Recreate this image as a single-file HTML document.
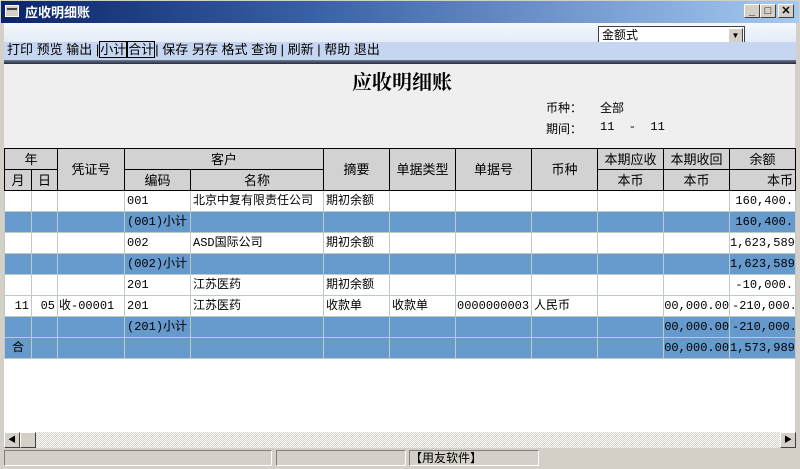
<!DOCTYPE html>
<html><head><meta charset="utf-8"><style>
*{margin:0;padding:0;box-sizing:border-box}
body{width:800px;height:469px;overflow:hidden;background:#d4d0c8;font-family:"Liberation Sans","Noto Sans CJK SC","WenQuanYi Zen Hei",sans-serif;font-size:12px;position:relative;color:#000}
.abs{position:absolute}
#title{left:0;top:0;width:800px;height:23px;background:linear-gradient(90deg,#0a246a 0%,#3a62a8 40%,#a6caf0 100%);color:#fff;font-weight:bold;font-size:13px;line-height:23px;padding-left:24px;border:1px solid #d4d0c8;border-bottom:none}
.wb{top:4px;width:16px;height:14px;background:#d4d0c8;border:1px solid;border-color:#fff #404040 #404040 #fff;font-size:11px;line-height:12px;text-align:center;color:#000;font-weight:bold}
#bar1{left:4px;top:23px;width:792px;height:19px;background:linear-gradient(180deg,#f4f8fc,#e4ecf8)}
#bar2{left:4px;top:42px;width:792px;height:18px;background:#c6d6f0;line-height:16px;font-size:13px;padding-left:3px;white-space:pre}
#line{left:4px;top:60px;width:792px;height:4px;background:linear-gradient(180deg,#6a7a98,#2a2a3a)}
#content{left:4px;top:64px;width:791px;height:368px;background:#fff}
#grey{left:4px;top:64px;width:791px;height:84px;background:#efefef}
table{position:absolute;left:4px;top:148px;width:791px;border-collapse:collapse;table-layout:fixed;font-size:12px;font-family:"Liberation Mono","Noto Sans CJK SC",monospace}
td{overflow:hidden;white-space:nowrap;height:21px;border:1px solid #bcccc4;padding:0 2px;line-height:20px;vertical-align:middle}
th{background:#d2d2d2;font-weight:normal;border:1px solid #000;height:21px;line-height:19px;text-align:center;overflow:hidden;white-space:nowrap;font-family:"Liberation Sans","Noto Sans CJK SC",sans-serif;font-size:13px}
.b td{background:#6699cc}
.r{text-align:right}
.rc{text-align:right;padding:0;direction:ltr}
.sm{line-height:12px;vertical-align:top;padding-top:4px}
#scroll{left:4px;top:432px;width:792px;height:16px;background:repeating-conic-gradient(#d4d0c8 0 25%,#fff 0 50%) 0 0/2px 2px}
.sb{top:432px;width:16px;height:16px;background:#d4d0c8;border:1px solid;border-color:#fff #404040 #404040 #fff;font-size:8px;line-height:14px;text-align:center}
.st{top:450px;height:16px;border:1px solid;border-color:#808080 #fff #fff #808080;font-size:12px;line-height:14px}
</style></head><body>
<div id="title" class="abs">应收明细账</div>
<div class="abs" style="left:5px;top:5px;width:14px;height:12px;background:#d4d0c8;border:1px solid #fff"></div>
<div class="abs" style="left:7px;top:8px;width:10px;height:2px;background:#404040"></div>
<div class="abs wb" style="left:744px">_</div>
<div class="abs wb" style="left:760px">□</div>
<div class="abs wb" style="left:778px">✕</div>
<div id="bar1" class="abs"></div>
<div class="abs" style="left:598px;top:26px;width:147px;height:19px;background:#fff;border:1px solid #404040;font-size:12px;line-height:17px;padding-left:3px">金额式</div>
<div class="abs" style="left:728px;top:28px;width:15px;height:15px;background:#d4d0c8;border:1px solid;border-color:#fff #404040 #404040 #fff;font-size:8px;line-height:13px;text-align:center">▼</div>
<div id="bar2" class="abs">打印 预览 输出 |<span style="border:1px solid #000">小计</span><span style="border:1px solid #000">合计</span>| 保存 另存 格式 查询 | 刷新 | 帮助 退出</div>
<div id="line" class="abs"></div>
<div id="content" class="abs"></div>
<div id="grey" class="abs"></div>
<div class="abs" style="left:352px;top:66px;font-size:20px;font-weight:bold;font-family:'Liberation Serif','Noto Serif CJK SC',serif">应收明细账</div>
<div class="abs" style="left:546px;top:99px">币种：</div>
<div class="abs" style="left:600px;top:99px">全部</div>
<div class="abs" style="left:546px;top:120px">期间：</div>
<div class="abs" style="left:600px;top:120px;white-space:pre;font-family:'Liberation Mono',monospace">11  -  11</div>
<table>
<colgroup><col style="width:27px"><col style="width:26px"><col style="width:67px"><col style="width:66px"><col style="width:133px"><col style="width:66px"><col style="width:66px"><col style="width:76px"><col style="width:66px"><col style="width:66px"><col style="width:66px"><col style="width:66px"></colgroup>
<tr><th colspan="2">年</th><th rowspan="2">凭证号</th><th colspan="2">客户</th><th rowspan="2">摘要</th><th rowspan="2">单据类型</th><th rowspan="2">单据号</th><th rowspan="2">币种</th><th>本期应收</th><th>本期收回</th><th>余额</th></tr>
<tr><th>月</th><th>日</th><th>编码</th><th>名称</th><th>本币</th><th>本币</th><th class="r" style="padding-right:2px">本币</th></tr>
<tr><td></td><td></td><td></td><td>001</td><td class="sm">北京中复有限责任公司</td><td>期初余额</td><td></td><td></td><td></td><td></td><td></td><td class="r">160,400.</td></tr>
<tr class="b"><td></td><td></td><td></td><td class="sm">(001)小计:</td><td></td><td></td><td></td><td></td><td></td><td></td><td></td><td class="r">160,400.</td></tr>
<tr><td></td><td></td><td></td><td>002</td><td>ASD国际公司</td><td>期初余额</td><td></td><td></td><td></td><td></td><td></td><td class="rc">1,623,589.</td></tr>
<tr class="b"><td></td><td></td><td></td><td class="sm">(002)小计:</td><td></td><td></td><td></td><td></td><td></td><td></td><td></td><td class="rc">1,623,589.</td></tr>
<tr><td></td><td></td><td></td><td>201</td><td>江苏医药</td><td>期初余额</td><td></td><td></td><td></td><td></td><td></td><td class="r">-10,000.</td></tr>
<tr><td class="r">11</td><td class="r">05</td><td style="padding:0 1px">收-00001</td><td>201</td><td>江苏医药</td><td>收款单</td><td>收款单</td><td style="padding:0 1px">0000000003</td><td>人民币</td><td></td><td class="rc">00,000.00</td><td class="r">-210,000.</td></tr>
<tr class="b"><td></td><td></td><td></td><td class="sm">(201)小计:</td><td></td><td></td><td></td><td></td><td></td><td></td><td class="rc">00,000.00</td><td class="r">-210,000.</td></tr>
<tr class="b"><td style="text-align:center">合</td><td></td><td></td><td></td><td></td><td></td><td></td><td></td><td></td><td></td><td class="rc">00,000.00</td><td class="rc">1,573,989.</td></tr>
</table>
<div id="scroll" class="abs"></div>
<div class="abs sb" style="left:4px">◀</div>
<div class="abs sb" style="left:20px"></div>
<div class="abs sb" style="left:780px">▶</div>
<div class="abs st" style="left:4px;width:268px"></div>
<div class="abs st" style="left:276px;width:130px"></div>
<div class="abs st" style="left:409px;width:130px">【用友软件】</div>
</body></html>
